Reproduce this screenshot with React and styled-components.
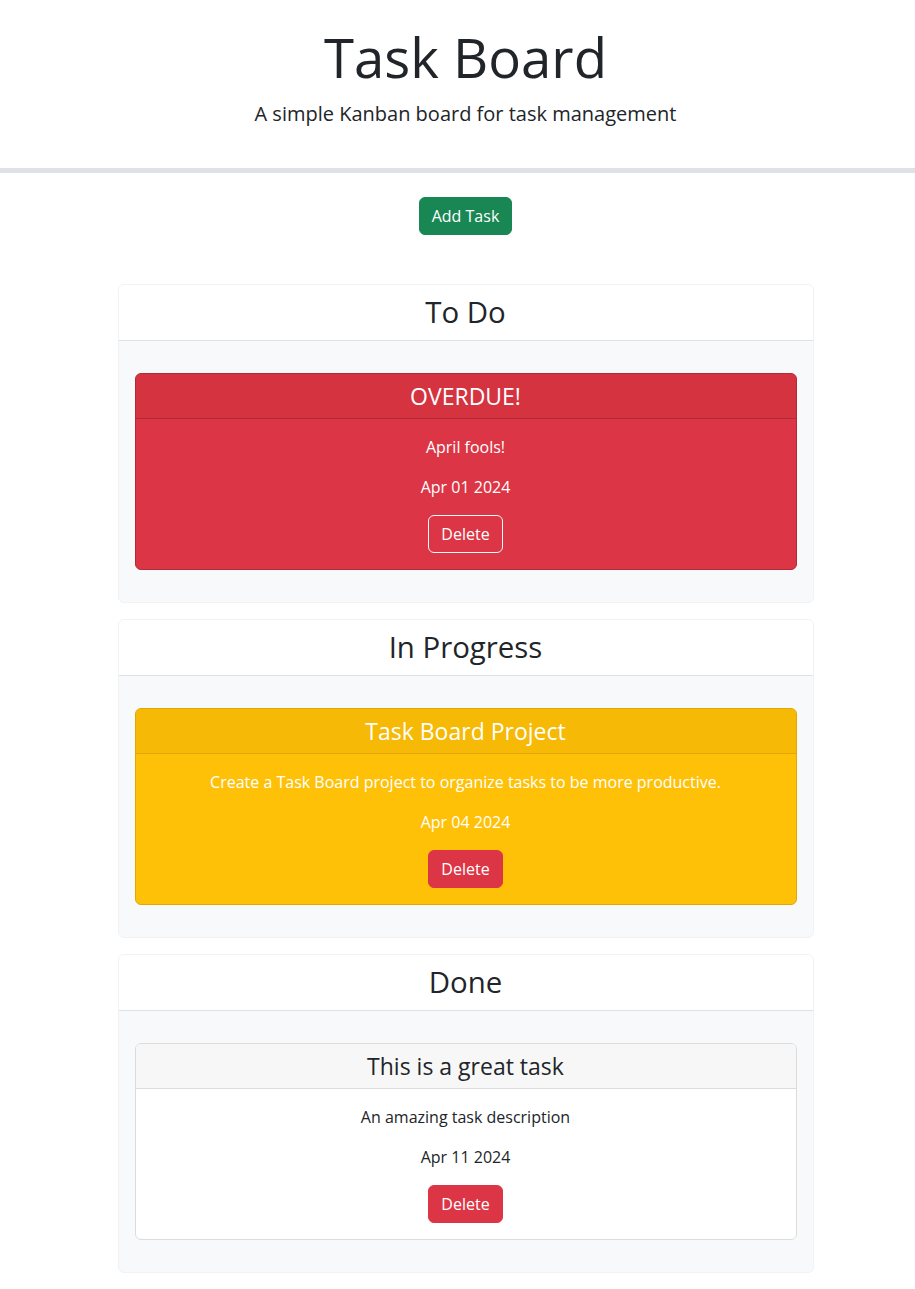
import React from "react";
import styled, { createGlobalStyle } from "styled-components";

const tasks = [
	{
		id: 1,
		column: "todo",
		title: "OVERDUE!",
		description: "April fools!",
		date: "Apr 01 2024",
		status: "danger",
	},
	{
		id: 2,
		column: "progress",
		title: "Task Board Project",
		description: "Create a Task Board project to organize tasks to be more productive.",
		date: "Apr 04 2024",
		status: "warning",
	},
	{
		id: 3,
		column: "done",
		title: "This is a great task",
		description: "An amazing task description",
		date: "Apr 11 2024",
		status: "normal",
	},
];

const columns = [
	{ key: "todo", name: "To Do" },
	{ key: "progress", name: "In Progress" },
	{ key: "done", name: "Done" },
];

const tones = {
	danger: { bg: "#dc3545", head: "#d5333f", border: "#b02a37", text: "#ffffff" },
	warning: { bg: "#ffc107", head: "#f5b906", border: "#e0a800", text: "#ffffff" },
	normal: { bg: "#ffffff", head: "#f7f7f7", border: "#dcdcdc", text: "#212529" },
};

const App = () => {
	return (
		<>
			<GlobalStyle />
			<Header>
				<Title>Task Board</Title>
				<Lead>A simple Kanban board for task management</Lead>
			</Header>
			<Main>
				<AddButton>Add Task</AddButton>
				<Board>
					{columns.map((col) => (
						<Column key={col.key}>
							<ColumnHead>{col.name}</ColumnHead>
							<ColumnBody>
								{tasks
									.filter((t) => t.column === col.key)
									.map((t) => (
										<TaskCard key={t.id} tone={tones[t.status]}>
											<TaskHead tone={tones[t.status]}>{t.title}</TaskHead>
											<TaskBody>
												<TaskText>{t.description}</TaskText>
												<TaskText>{t.date}</TaskText>
												<DeleteButton outline={t.status === "danger"}>Delete</DeleteButton>
											</TaskBody>
										</TaskCard>
									))}
							</ColumnBody>
						</Column>
					))}
				</Board>
			</Main>
		</>
	);
};

export default App;

const GlobalStyle = createGlobalStyle`
	* {
		box-sizing: border-box;
	}
	body {
		margin: 0;
		background: #fff;
		color: #212529;
		font-family: "Open Sans", "Liberation Sans", sans-serif;
		font-size: 16px;
		line-height: 1.5;
	}
`;

const Header = styled.header`
	padding: 23px 0 39px 16px;
	border-bottom: 5px solid #dee2e6;
	text-align: center;
`;

const Title = styled.h1`
	margin: 0 0 8px;
	font-size: 54.5px;
	font-weight: 400;
	line-height: 68px;
`;

const Lead = styled.p`
	margin: 0;
	font-size: 20px;
	font-weight: 400;
	line-height: 30px;
`;

const Main = styled.main`
	padding: 24px 0 16px 16px;
	display: flex;
	flex-direction: column;
	align-items: center;
`;

const AddButton = styled.button`
	font-family: inherit;
	font-size: 16px;
	line-height: 24px;
	padding: 6px 12px;
	color: #fff;
	background: #198754;
	border: 1px solid #198754;
	border-radius: 6px;
`;

const Board = styled.div`
	margin-top: 49px;
	width: 696px;
	display: flex;
	flex-direction: column;
	gap: 16px;
`;

const Column = styled.section`
	border: 1px solid #f1f2f3;
	border-radius: 6px;
	overflow: hidden;
	background: #f8f9fa;
`;

const ColumnHead = styled.h2`
	margin: 0;
	padding: 8px 16px;
	background: #fff;
	border-bottom: 1px solid #dee2e6;
	font-size: 29.4px;
	font-weight: 400;
	line-height: 39px;
	text-align: center;
`;

const ColumnBody = styled.div`
	padding: 32px 16px 32px;
`;

const TaskCard = styled.div`
	background: ${(p) => p.tone.bg};
	border: 1px solid ${(p) => p.tone.border};
	border-radius: 6px;
	color: ${(p) => p.tone.text};
	overflow: hidden;
`;

const TaskHead = styled.h4`
	margin: 0;
	padding: 8px 16px;
	background: ${(p) => p.tone.head};
	border-bottom: 1px solid ${(p) => p.tone.border};
	font-size: 23px;
	font-weight: 400;
	line-height: 28px;
	text-align: center;
`;

const TaskBody = styled.div`
	padding: 16px;
	text-align: center;
`;

const TaskText = styled.p`
	margin: 0 0 16px;
`;

const DeleteButton = styled.button`
	font-family: inherit;
	font-size: 16px;
	line-height: 24px;
	padding: 6px 12px;
	color: #fff;
	background: ${(p) => (p.outline ? "transparent" : "#dc3545")};
	border: 1px solid ${(p) => (p.outline ? "#f8f9fa" : "#dc3545")};
	border-radius: 6px;
`;
